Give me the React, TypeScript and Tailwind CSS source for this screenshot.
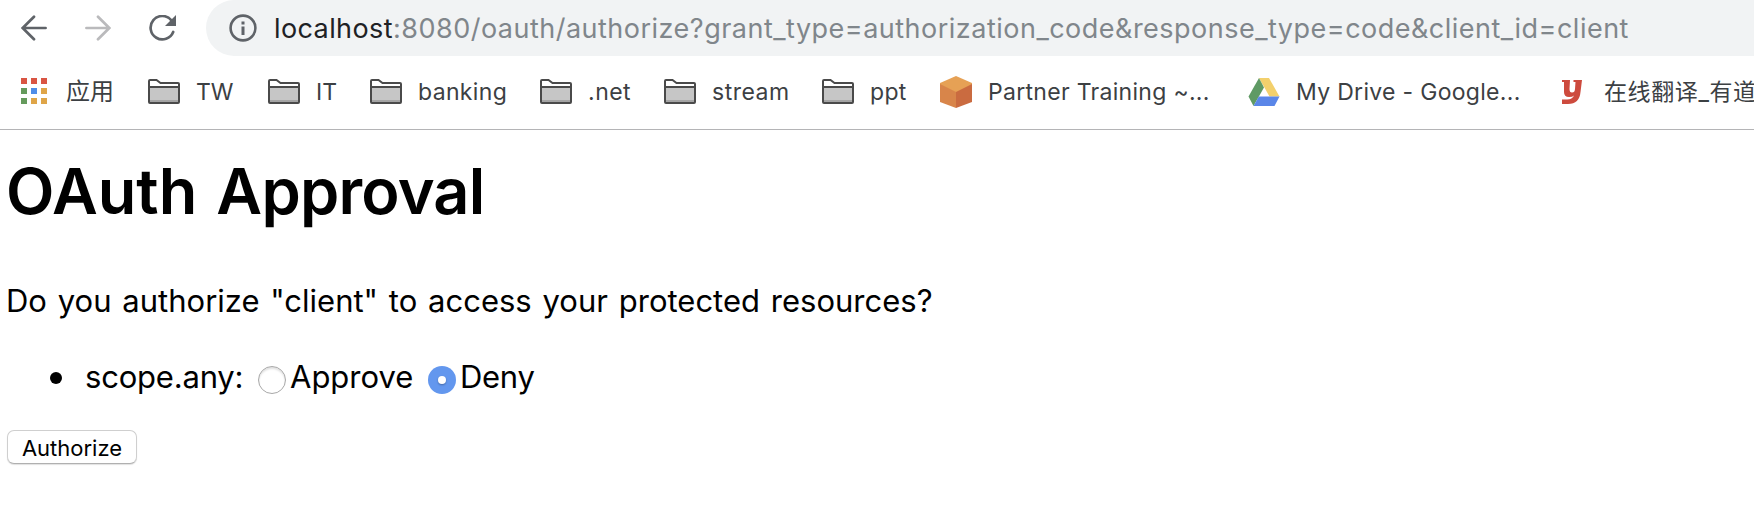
import type { ReactNode } from 'react';

function BackArrow({ className }: { className: string }) {
  return (
    <svg className={className} width="26" height="26" viewBox="0 0 26 26" fill="none" stroke="currentColor" strokeWidth="2.7" strokeLinecap="round">
      <path d="M24.6 13H2M13 1.700L1.700 13L13 24.300" />
    </svg>
  );
}

function Reload() {
  return (
    <svg className="text-[#5f6368]" width="28" height="26" viewBox="0 0 28 26" fill="none">
      <path d="M22.2 5.1A11.700 11.700 0 1 0 24.200 17" stroke="currentColor" strokeWidth="2.7" strokeLinecap="round" />
      <path d="M27 0V11H16Z" fill="currentColor" />
    </svg>
  );
}

function Info() {
  return (
    <svg className="text-[#5f6368]" width="28" height="28" viewBox="0 0 28 28" fill="none">
      <circle cx="14" cy="14" r="12.4" stroke="currentColor" strokeWidth="2.6" />
      <path d="M12.500 7.500h3v3h-3zM12.500 12.500h3V21h-3z" fill="currentColor" />
    </svg>
  );
}

function Folder() {
  return (
    <svg width="32" height="25" viewBox="0 0 32 25">
      <path d="M1 23V2Q1 1 2 1H8.5L12.5 4H30Q31 4 31 5V23Q31 24 30 24H2Q1 24 1 23Z" fill="#fff" stroke="#4a4a4a" strokeWidth="2" />
      <path d="M2 8H30V21H2Z" fill="#c6c6c6" />
      <path d="M2 21H30V23H2Z" fill="#a4a4a4" />
      <path d="M1 8H31" stroke="#4a4a4a" strokeWidth="2" />
    </svg>
  );
}

function Apps() {
  const colors = ['#d95543', '#d95543', '#d95543', '#659a5c', '#4f8de8', '#dfa548', '#659a5c', '#dfa548', '#dfa548'];
  return (
    <svg width="26" height="26" viewBox="0 0 26 26">
      {colors.map((c, i) => (
        <rect key={i} x={(i % 3) * 10} y={Math.floor(i / 3) * 10} width="6" height="6" fill={c} />
      ))}
    </svg>
  );
}

function Cube() {
  return (
    <svg className="mt-0.5" width="32" height="32" viewBox="0 0 32 32">
      <path d="M16 0L32 7V16H0V7Z" fill="#e6a155" />
      <path d="M0 8L16 16V32L0 26Z" fill="#d8854a" />
      <path d="M32 8L16 16V32L32 26Z" fill="#ca6b40" />
    </svg>
  );
}

function Drive() {
  return (
    <svg className="mt-0.5" width="32" height="28" viewBox="0 0 32 28">
      <path d="M11 0H21L31.5 18.5H21.5Z" fill="#f3d06c" />
      <path d="M11 0L16 9.5L5.5 28L.5 18.5Z" fill="#5f9a64" />
      <path d="M10.8 18.5H31.5L26.5 28H5.5Z" fill="#5a86e8" />
    </svg>
  );
}

function Youdao() {
  return (
    <svg className="mt-0.5" width="20" height="24" viewBox="0 0 20 24" fill="#cd4a3d">
      <path d="M0 0H8L7.500 9Q7.500 12.500 10 12.500Q12.800 12.500 13 9L13.500 2H11.500V0H20L18.500 12Q17.500 24 6 24H0V19.500H4Q10 20 12 15.500Q10.500 17 7 17Q2 17 2 12V2H0Z" />
    </svg>
  );
}

function Bookmark({ icon, width, children, tracking = 'tracking-[0.35px]' }: { icon: ReactNode; width: string; children: string; tracking?: string }) {
  return (
    <div className={`flex h-8 shrink-0 items-center gap-4 ${width}`}>
      <span className="flex w-8 shrink-0 justify-center">{icon}</span>
      <span className={`whitespace-pre pt-0.5 text-[23px] leading-8 ${tracking}`}>{children}</span>
    </div>
  );
}

function Radio({ checked = false }: { checked?: boolean }) {
  return checked ? (
    <span className="mt-[5px] flex size-7 items-center justify-center rounded-full bg-[#6397ee]">
      <span className="size-2 rounded-full bg-white shadow-[0_1px_2px_rgba(0,0,0,0.3)]" />
    </span>
  ) : (
    <span className="mt-[5px] size-7 rounded-full border border-[#a8a8a8] bg-white shadow-[inset_0_2px_2px_rgba(0,0,0,0.12)]" />
  );
}

export default function App() {
  return (
    <div className="h-[510px] w-full overflow-hidden bg-white font-['Inter','Noto_Sans_CJK_SC',sans-serif] text-black">
      <header className="flex h-[130px] flex-col border-b border-[#b4b4b6]">
        <div className="flex h-14 shrink-0">
          <nav className="flex h-[55px] w-[206px] shrink-0 items-center pl-[21px]">
            <BackArrow className="text-[#5f6368]" />
            <BackArrow className="ml-[38px] rotate-180 text-[#bababc]" />
            <span className="ml-[38px]"><Reload /></span>
          </nav>
          <div className="flex flex-1 items-center rounded-l-full bg-[#f1f3f4] pl-[23px]">
            <Info />
            <p className="ml-[17px] whitespace-pre pt-0.5 text-[27px] leading-[54px] text-[#80868b]">
              <span className="tracking-[0.4px] text-[#202124]">localhost</span>
              <span className="tracking-[0.49px]">:8080/oauth/authorize?grant_type=authorization_code&amp;response_type=code&amp;client_id=client</span>
            </p>
          </div>
        </div>
        <div className="mt-[19px] flex h-8 items-center text-[#3c4043]">
          <div className="flex w-[148px] shrink-0 items-center pl-[21px]">
            <Apps />
            <span className="ml-[19px] pt-0.5 text-[24px] leading-8">应用</span>
          </div>
          <Bookmark icon={<Folder />} width="w-[120px]" tracking="tracking-normal">TW</Bookmark>
          <Bookmark icon={<Folder />} width="w-[102px]" tracking="tracking-normal">IT</Bookmark>
          <Bookmark icon={<Folder />} width="w-[170px]">banking</Bookmark>
          <Bookmark icon={<Folder />} width="w-[124px]" tracking="tracking-[0.5px]">.net</Bookmark>
          <Bookmark icon={<Folder />} width="w-[158px]" tracking="tracking-[0.5px]">stream</Bookmark>
          <Bookmark icon={<Folder />} width="w-[118px]">ppt</Bookmark>
          <Bookmark icon={<Cube />} width="w-[308px]" tracking="tracking-[0.3px]">Partner Training ~...</Bookmark>
          <Bookmark icon={<Drive />} width="w-[308px]" tracking="tracking-[0.3px]">My Drive - Google...</Bookmark>
          <Bookmark icon={<Youdao />} width="w-[198px]" tracking="tracking-[0.6px]">在线翻译_有道</Bookmark>
        </div>
      </header>
      <main className="pl-[6px]">
        <h1 className="pt-[23px] text-[63px] font-semibold leading-[76px] tracking-[-0.8px] [word-spacing:4px]">
          <span className="tracking-normal">OAuth</span> Approval
        </h1>
        <p className="mt-[52px] text-[31px] leading-[40px] [word-spacing:2.1px]">Do you authorize "client" to access your protected resources?</p>
        <ul className="mt-[36px]">
          <li className="flex h-10 items-center text-[31px] leading-10">
            <span className="ml-[44px] mt-0.5 size-3 rounded-full bg-black" />
            <span className="ml-[23px] w-[173px] tracking-[-0.2px]">scope.any:</span>
            <label className="flex w-[170px] items-center gap-[4px]"><Radio />Approve</label>
            <label className="flex items-center gap-[4px] tracking-[-0.3px]"><Radio checked />Deny</label>
          </li>
        </ul>
        <button className="ml-px mt-[33px] h-[34px] w-[130px] rounded-[7px] border border-[#cfcfcf] border-b-[#b0b0b0] bg-white pt-0.5 text-[22px] leading-[30px] shadow-[0_1px_1px_rgba(0,0,0,0.12)]">Authorize</button>
      </main>
    </div>
  );
}
